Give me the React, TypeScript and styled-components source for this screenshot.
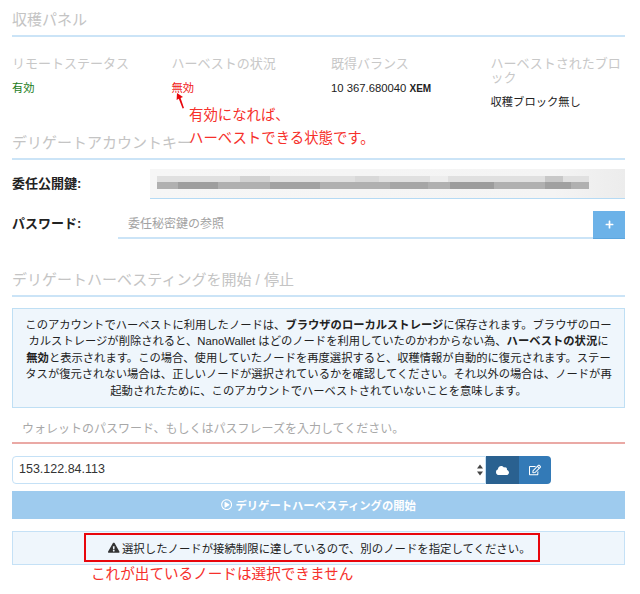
import React from "react";
import styled, { createGlobalStyle } from "styled-components";
import { FaCloud, FaExclamationTriangle, FaPlus, FaRegEdit, FaRegPlayCircle } from "react-icons/fa";

const Global = createGlobalStyle`
  html, body { margin: 0; padding: 0; background: #fff; }
  body { font-family: "Liberation Sans", "Noto Sans CJK JP", sans-serif; color: #222; }
  * { box-sizing: border-box; }
`;

const Page = styled.div`
  position: relative;
  width: 640px;
  height: 594px;
  padding: 0 15px 0 12px;
  overflow: hidden;
`;

const SectionTitle = styled.h3<{ $height: number; $top?: number }>`
  margin: ${(p) => p.$top ?? 0}px 0 0;
  height: ${(p) => p.$height}px;
  display: flex;
  align-items: flex-end;
  padding-bottom: 4px;
  border-bottom: 2px solid #cbe4f7;
  font-size: 15px;
  line-height: 22px;
  font-weight: 400;
  color: #c4c4c4;
`;

const Stats = styled.div`
  display: grid;
  grid-template-columns: 159.5px 159.5px 159.5px 135px;
  margin-top: 20px;
  height: 59px;
`;

const StatLabel = styled.div`
  font-size: 13px;
  line-height: 14px;
  color: #c8c8c8;
  width: 132px;
  word-break: break-all;
  line-break: loose;
`;

const StatValue = styled.div<{ $color?: string }>`
  margin-top: 10px;
  font-size: 11.3px;
  line-height: 14px;
  color: ${(p) => p.$color ?? "#222"};
`;

const Unit = styled.b`
  font-size: 10px;
`;

const KeyRow = styled.div`
  display: flex;
  align-items: stretch;
  height: 30px;
  margin-top: 9px;
`;

const PasswordRow = styled.div`
  display: flex;
  align-items: stretch;
  height: 28px;
  margin-top: 12px;
`;

const RowLabel = styled.label<{ $width: number; $lift: number }>`
  flex: 0 0 ${(p) => p.$width}px;
  padding-bottom: ${(p) => p.$lift}px;
  font-size: 13px;
  font-weight: 700;
  color: #222;
  display: flex;
  align-items: center;
`;

const BlurredField = styled.div`
  flex: 1;
  height: 30px;
  background: linear-gradient(90deg, #f6f6f6 0%, #f4f4f4 85%, #ececec 100%);
  border-bottom: 1px solid #b5daf4;
  overflow: hidden;
`;

const BlurSvg = styled.svg`
  display: block;
`;

const FileInput = styled.input`
  flex: 1;
  min-width: 0;
  height: 28px;
  border: 0;
  border-bottom: 2px solid #cbe4f7;
  padding: 0 10px;
  font: inherit;
  font-size: 12px;
  outline: none;
  &::placeholder { color: #a2a2a2; opacity: 1; }
`;

const PlusButton = styled.button`
  flex: 0 0 32px;
  height: 28px;
  border: 0;
  border-bottom: 1px solid #5ba5de;
  background: #6cb2e8;
  color: #fff;
  display: flex;
  align-items: center;
  justify-content: center;
  padding: 0;
  font-size: 9px;
`;

const InfoBox = styled.div`
  margin-top: 11px;
  height: 100px;
  background: #eff6fc;
  border: 1px solid #bfdff4;
  padding: 8px 4px 0;
  text-align: center;
  font-size: 11.3px;
  line-height: 16.4px;
  color: #222;
  white-space: nowrap;
`;

const WalletInput = styled.input`
  display: block;
  width: 100%;
  height: 36px;
  margin: 0;
  border: 0;
  border-bottom: 2px solid #eaa9a5;
  padding: 7px 10px 0;
  font: inherit;
  font-size: 12px;
  outline: none;
  &::placeholder { color: #a8a8a8; opacity: 1; }
`;

const NodeRow = styled.div`
  display: flex;
  height: 28px;
  margin-top: 12px;
  width: 539px;
`;

const SelectWrap = styled.div`
  position: relative;
  flex: 1;
`;

const NodeSelect = styled.select`
  appearance: none;
  width: 100%;
  height: 28px;
  border: 1px solid #c5e1f6;
  border-radius: 4px 0 0 4px;
  background: #fff;
  padding: 0 20px 2px 6px;
  font: inherit;
  font-size: 12.5px;
  color: #333;
  outline: none;
`;

const SelectArrows = styled.svg`
  position: absolute;
  right: 2px;
  top: 8px;
`;

const IconButton = styled.button<{ $dark?: boolean }>`
  flex: 0 0 ${(p) => (p.$dark ? 33 : 32)}px;
  border: 0;
  padding: 0;
  color: #fff;
  font-size: ${(p) => (p.$dark ? 13 : 12)}px;
  display: flex;
  align-items: center;
  justify-content: center;
  background: ${(p) => (p.$dark ? "#2a6190" : "#337ab7")};
  border-radius: ${(p) => (p.$dark ? "0" : "0 4px 4px 0")};
`;

const StartButton = styled.button`
  display: flex;
  align-items: center;
  justify-content: center;
  gap: 3px;
  width: 100%;
  height: 28px;
  margin-top: 7px;
  border: 0;
  background: #9ecbee;
  color: #fff;
  font: inherit;
  font-size: 11.3px;
  font-weight: 700;
  padding: 0;
`;

const WarnBox = styled.div`
  display: flex;
  align-items: center;
  justify-content: center;
  gap: 2px;
  height: 34px;
  margin-top: 12px;
  background: #eff6fc;
  border: 1px solid #c5e1f6;
  padding: 0 0 0 2px;
  font-size: 11.4px;
  color: #222;
`;

const WarnIcon = styled(FaExclamationTriangle)`
  font-size: 11.5px;
  color: #333;
`;

const Note = styled.div<{ $x: number; $y: number; $size: number }>`
  position: absolute;
  left: ${(p) => p.$x}px;
  top: ${(p) => p.$y}px;
  font-size: ${(p) => p.$size}px;
  line-height: 20px;
  color: #f6302b;
  white-space: nowrap;
`;

const NoteArrow = styled.svg`
  position: absolute;
  left: 172px;
  top: 90px;
`;

const RedFrame = styled.div`
  position: absolute;
  left: 84px;
  top: 533px;
  width: 456px;
  height: 29px;
  border: 2px solid #e8060c;
`;

const blurCells: [number, number, number, number, string][] = [
  [7, 7, 432, 6, "#e0e0e0"],
  [7, 13, 432, 7, "#b0b0b0"],
  [28, 13, 40, 7, "#9e9e9e"],
  [90, 7, 30, 6, "#d2d2d2"],
  [120, 13, 50, 7, "#a2a2a2"],
  [205, 7, 24, 6, "#d8d8d8"],
  [240, 13, 38, 7, "#a6a6a6"],
  [300, 13, 44, 7, "#9c9c9c"],
  [280, 7, 18, 6, "#ededed"],
  [395, 13, 26, 7, "#a0a0a0"],
  [395, 7, 18, 6, "#c8c8c8"],
];

export default function App() {
  return (
    <Page>
      <Global />
      <SectionTitle $height={37}>収穫パネル</SectionTitle>
      <Stats>
        <div>
          <StatLabel>リモートステータス</StatLabel>
          <StatValue $color="#1c7c1c">有効</StatValue>
        </div>
        <div>
          <StatLabel>ハーベストの状況</StatLabel>
          <StatValue $color="#f02020">無効</StatValue>
        </div>
        <div>
          <StatLabel>既得バランス</StatLabel>
          <StatValue>10 367.680040 <Unit>XEM</Unit></StatValue>
        </div>
        <div>
          <StatLabel>ハーベストされたブロック</StatLabel>
          <StatValue>収穫ブロック無し</StatValue>
        </div>
      </Stats>
      <SectionTitle $height={44}>デリゲートアカウントキー</SectionTitle>
      <KeyRow>
        <RowLabel $width={138} $lift={3}>委任公開鍵:</RowLabel>
        <BlurredField>
          <BlurSvg width="475" height="29" viewBox="0 0 475 29">
            {blurCells.map(([x, y, w, h, c]) => (
              <rect key={`${x}-${y}`} x={x} y={y} width={w} height={h} fill={c} />
            ))}
          </BlurSvg>
        </BlurredField>
      </KeyRow>
      <PasswordRow>
        <RowLabel $width={106} $lift={6}>パスワード:</RowLabel>
        <FileInput placeholder="委任秘密鍵の参照" readOnly />
        <PlusButton aria-label="追加"><FaPlus /></PlusButton>
      </PasswordRow>
      <SectionTitle $height={58}>デリゲートハーベスティングを開始 / 停止</SectionTitle>
      <InfoBox>
        このアカウントでハーベストに利用したノードは、<b>ブラウザのローカルストレージ</b>に保存されます。ブラウザのロー<br />
        カルストレージが削除されると、NanoWallet はどのノードを利用していたのかわからない為、<b>ハーベストの状況</b>に<br />
        <b>無効</b>と表示されます。この場合、使用していたノードを再度選択すると、収穫情報が自動的に復元されます。ステー<br />
        タスが復元されない場合は、正しいノードが選択されているかを確認してください。それ以外の場合は、ノードが再<br />
        起動されたために、このアカウントでハーベストされていないことを意味します。
      </InfoBox>
      <WalletInput placeholder="ウォレットのパスワード、もしくはパスフレーズを入力してください。" readOnly />
      <NodeRow>
        <SelectWrap>
          <NodeSelect defaultValue="153.122.84.113">
            <option>153.122.84.113</option>
          </NodeSelect>
          <SelectArrows width="8" height="12" viewBox="0 0 8 12">
            <path d="M4 0.5 7 4.5H1Z M4 11.5 1 7.5H7Z" fill="#444" />
          </SelectArrows>
        </SelectWrap>
        <IconButton $dark aria-label="ノード"><FaCloud /></IconButton>
        <IconButton aria-label="編集"><FaRegEdit /></IconButton>
      </NodeRow>
      <StartButton><FaRegPlayCircle /> デリゲートハーベスティングの開始</StartButton>
      <WarnBox>
        <WarnIcon /> 選択したノードが接続制限に達しているので、別のノードを指定してください。
      </WarnBox>
      <NoteArrow width="16" height="20" viewBox="0 0 16 20">
        <path d="M5 3 11 7 8.6 8 12 18 10.6 18.4 6.8 8.8 4.6 10Z" fill="#e8060c" />
      </NoteArrow>
      <Note $x={189} $y={105} $size={14.4}>有効になれば、</Note>
      <Note $x={189} $y={128} $size={14.4}>ハーベストできる状態です。</Note>
      <RedFrame />
      <Note $x={91} $y={564} $size={14.6}>これが出ているノードは選択できません</Note>
    </Page>
  );
}
